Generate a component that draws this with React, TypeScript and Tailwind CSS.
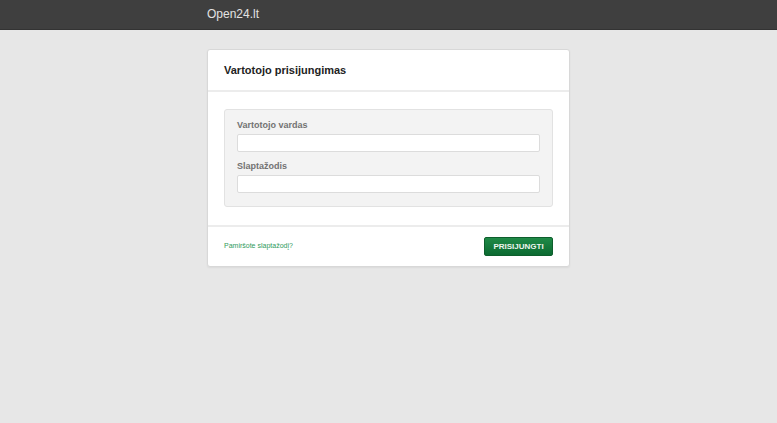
export default function App() {
  return (
    <div className="min-h-[423px] bg-[#e7e7e7] font-['Liberation_Sans',Arial,sans-serif]">
      <header className="h-[30px] bg-[#3f3f3f] border-b border-[#333]">
        <div className="mx-auto flex h-full w-[363px] items-center">
          <span className="text-[12px] leading-none text-[#e2e2e2] pb-[2px]">Open24.lt</span>
        </div>
      </header>

      <div className="mx-auto mt-[19px] w-[363px] rounded-[3px] border border-[#d8d8d8] bg-white shadow-[0_1px_2px_rgba(0,0,0,0.06)]">
        <div className="flex h-[42px] items-center border-b-2 border-[#ececec] px-[16px]">
          <h1 className="text-[11px] font-bold text-[#222]">Vartotojo prisijungimas</h1>
        </div>

        <div className="px-[16px] pt-[17px] pb-[18px]">
          <div className="rounded-[3px] border border-[#e2e2e2] bg-[#f3f3f3] px-[12px] pt-[10px] pb-[13px]">
            <label className="block text-[9px] font-bold leading-[11px] text-[#727272]">Vartotojo vardas</label>
            <input className="mt-[3px] block h-[18px] w-full rounded-[2px] border border-[#dcdcdc] bg-white outline-none" />
            <label className="mt-[9px] block text-[9px] font-bold leading-[11px] text-[#727272]">Slaptažodis</label>
            <input type="password" className="mt-[3px] block h-[18px] w-full rounded-[2px] border border-[#dcdcdc] bg-white outline-none" />
          </div>
        </div>

        <div className="flex h-[41px] items-center justify-between border-t-2 border-[#ececec] px-[16px]">
          <a href="#" className="text-[7px] text-[#2f9a5c]">Pamiršote slaptažodį?</a>
          <button className="h-[19px] w-[69px] rounded-[2px] border border-[#0d5e2c] bg-gradient-to-b from-[#1f8a47] to-[#0b6a31] text-[8px] font-bold text-[#eef5ef]">
            PRISIJUNGTI
          </button>
        </div>
      </div>
    </div>
  );
}
